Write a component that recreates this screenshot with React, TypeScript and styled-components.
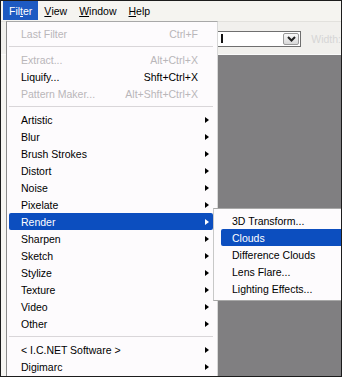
import { createGlobalStyle } from "styled-components";
import styled from "styled-components";

type Entry =
  | { kind: "sep" }
  | { kind: "item"; label: string; shortcut?: string; disabled?: boolean; sub?: boolean; active?: boolean };

const filterMenu: Entry[] = [
  { kind: "item", label: "Last Filter", shortcut: "Ctrl+F", disabled: true },
  { kind: "sep" },
  { kind: "item", label: "Extract...", shortcut: "Alt+Ctrl+X", disabled: true },
  { kind: "item", label: "Liquify...", shortcut: "Shft+Ctrl+X" },
  { kind: "item", label: "Pattern Maker...", shortcut: "Alt+Shft+Ctrl+X", disabled: true },
  { kind: "sep" },
  { kind: "item", label: "Artistic", sub: true },
  { kind: "item", label: "Blur", sub: true },
  { kind: "item", label: "Brush Strokes", sub: true },
  { kind: "item", label: "Distort", sub: true },
  { kind: "item", label: "Noise", sub: true },
  { kind: "item", label: "Pixelate", sub: true },
  { kind: "item", label: "Render", sub: true, active: true },
  { kind: "item", label: "Sharpen", sub: true },
  { kind: "item", label: "Sketch", sub: true },
  { kind: "item", label: "Stylize", sub: true },
  { kind: "item", label: "Texture", sub: true },
  { kind: "item", label: "Video", sub: true },
  { kind: "item", label: "Other", sub: true },
  { kind: "sep" },
  { kind: "item", label: "< I.C.NET Software >", sub: true },
  { kind: "item", label: "Digimarc", sub: true },
];

const renderMenu = ["3D Transform...", "Clouds", "Difference Clouds", "Lens Flare...", "Lighting Effects..."];

const App = () => {
  return (
    <>
      <GlobalStyle />
      <Frame>
        <MenuBar>
          <TopItem active>
            Fil<u>t</u>er
          </TopItem>
          <TopItem>
            <u>V</u>iew
          </TopItem>
          <TopItem>
            <u>W</u>indow
          </TopItem>
          <TopItem>
            <u>H</u>elp
          </TopItem>
        </MenuBar>

        <Body>
          <OptionsBar>
            <Select>
              <Caret />
              <SelectButton>
                <svg width="9" height="6" viewBox="0 0 9 6">
                  <path d="M1 1 L4.5 4.5 L8 1" fill="none" stroke="#222" strokeWidth="2" />
                </svg>
              </SelectButton>
            </Select>
            <FadedLabel>Width:</FadedLabel>
          </OptionsBar>
          <Workspace>
            <SidePanel />
            <Canvas />
          </Workspace>

          <Dropdown>
            {filterMenu.map((entry, i) =>
              entry.kind === "sep" ? (
                <Separator key={i} />
              ) : (
                <Item key={i} active={entry.active} disabled={entry.disabled}>
                  <Label>{entry.label}</Label>
                  {entry.shortcut && <Shortcut>{entry.shortcut}</Shortcut>}
                  <ArrowCell>{entry.sub && <Arrow active={entry.active} />}</ArrowCell>
                </Item>
              )
            )}
          </Dropdown>

          <Submenu>
            {renderMenu.map((label) => (
              <SubItem key={label} active={label === "Clouds"}>
                {label}
              </SubItem>
            ))}
          </Submenu>
        </Body>
      </Frame>
    </>
  );
};

const GlobalStyle = createGlobalStyle`
  html, body {
    margin: 0;
    padding: 0;
    background: #fff;
  }
  * {
    box-sizing: border-box;
  }
`;

const Frame = styled.div`
  width: 342px;
  height: 377px;
  border: 1px solid #1c1c1c;
  overflow: hidden;
  display: flex;
  flex-direction: column;
  font-family: "Liberation Sans", Arial, sans-serif;
  font-size: 10.5px;
  color: #000;
  background: #f4f3ef;
`;

const MenuBar = styled.div`
  height: 20px;
  display: flex;
  align-items: stretch;
  padding: 0 0 1px 2px;
  background: #f5f4f0;
  font-size: 10.5px;
`;

const TopItem = styled.div<{ active?: boolean }>`
  display: flex;
  align-items: center;
  padding: 0 6px;
  background: ${(p) => (p.active ? "#1d5ac2" : "transparent")};
  color: ${(p) => (p.active ? "#fff" : "#000")};
`;

const Body = styled.div`
  position: relative;
  flex: 1;
  display: flex;
  flex-direction: column;
`;

const OptionsBar = styled.div`
  height: 34px;
  display: flex;
  align-items: center;
  padding: 1px 0 0 200px;
  background: #f1f0ed;
  border-top: 1px solid #e2e1dd;
  border-bottom: 1px solid #fafafa;
`;

const Select = styled.div`
  width: 106px;
  height: 16px;
  display: flex;
  align-items: center;
  justify-content: space-between;
  border: 1px solid #6f6f6f;
  background: #fff;
  padding: 0 1px 0 19px;
`;

const Caret = styled.span`
  width: 2px;
  height: 9px;
  background: #111;
`;

const SelectButton = styled.span`
  width: 16px;
  height: 12px;
  display: flex;
  align-items: center;
  justify-content: center;
  border: 1px solid #9a9a9a;
  border-radius: 2px;
  background: linear-gradient(#fafafa, #d8d8d8);
`;

const FadedLabel = styled.span`
  margin-left: 10px;
  color: #d6d6d6;
`;

const Workspace = styled.div`
  flex: 1;
  display: flex;
`;

const SidePanel = styled.div`
  width: 60px;
  background: #f6f5f2;
`;

const Canvas = styled.div`
  flex: 1;
  background: #807f81;
`;

const Dropdown = styled.div`
  position: absolute;
  left: 5px;
  top: 0;
  width: 212px;
  padding: 3px 0;
  background: #fdfbfd;
  border: 1px solid #a8a8a8;
  border-left-color: #8a8a8a;
  border-right-color: #d8d8d8;
`;

const Item = styled.div<{ active?: boolean; disabled?: boolean }>`
  height: 17px;
  margin: 0 4px 0 2px;
  padding: 0 4px 0 12px;
  display: flex;
  align-items: center;
  border-radius: 2px;
  white-space: nowrap;
  background: ${(p) => (p.active ? "#0c4ebf" : "transparent")};
  color: ${(p) => (p.active ? "#fff" : p.disabled ? "#b9b6b9" : "#000")};
`;

const Label = styled.span`
  flex: 1;
`;

const Shortcut = styled.span`
  text-align: right;
`;

const ArrowCell = styled.span`
  width: 11px;
  display: flex;
  justify-content: flex-end;
`;

const Arrow = styled.span<{ active?: boolean }>`
  width: 0;
  height: 0;
  border-top: 3.5px solid transparent;
  border-bottom: 3.5px solid transparent;
  border-left: 4px solid ${(p) => (p.active ? "#fff" : "#000")};
`;

const Separator = styled.div`
  height: 9px;
  margin: 0 4px 0 2px;
  display: flex;
  align-items: center;
  &::after {
    content: "";
    flex: 1;
    height: 1px;
    background: #d9d6d9;
  }
`;

const Submenu = styled.div`
  position: absolute;
  left: 212px;
  top: 187px;
  width: 132px;
  padding: 3px 0;
  background: #fdfbfd;
  border: 1px solid #a8a8a8;
  border-left-color: #c8c8c8;
`;

const SubItem = styled.div<{ active?: boolean }>`
  height: 17px;
  margin-left: 7px;
  padding-left: 11px;
  display: flex;
  align-items: center;
  border-radius: 2px;
  white-space: nowrap;
  background: ${(p) => (p.active ? "#0c4ebf" : "transparent")};
  color: ${(p) => (p.active ? "#fff" : "#000")};
`;

export default App;
